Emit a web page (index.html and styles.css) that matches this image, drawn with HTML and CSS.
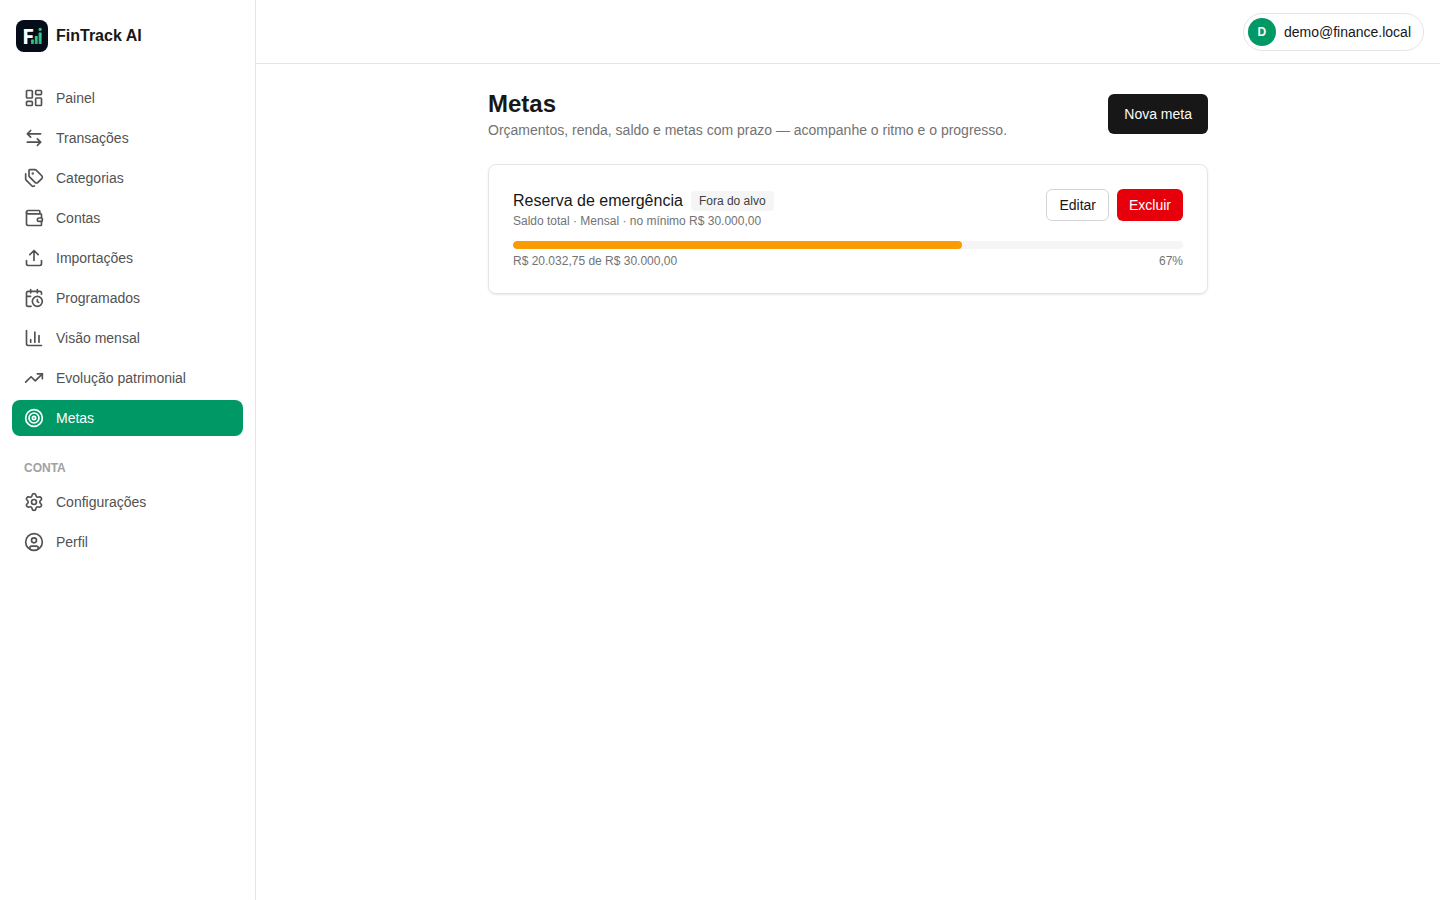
FILE: index.html
```html
<!DOCTYPE html>
<html lang="pt-BR">
<head>
  <meta charset="utf-8">
  <meta name="viewport" content="width=device-width, initial-scale=1">
  <title>Metas · FinTrack AI</title>
  <link rel="stylesheet" href="styles.css">
</head>
<body>
  <div class="app">
    <aside class="sidebar">
      <a class="brand" href="#">
        <svg class="brand-mark" viewBox="0 0 32 32" aria-hidden="true">
          <defs>
            <linearGradient id="bars" x1="0" y1="1" x2="1" y2="0">
              <stop offset="0" stop-color="#1fa86c"/>
              <stop offset="1" stop-color="#4cd6a0"/>
            </linearGradient>
          </defs>
          <rect width="32" height="32" rx="8" fill="#050d18"/>
          <text class="brand-letter" x="6" y="24">F</text>
          <g fill="url(#bars)">
            <rect x="15" y="19.500" width="2.800" height="4.500" rx=".6"/>
            <rect x="18.800" y="16" width="2.800" height="8" rx=".6"/>
            <rect x="22.600" y="12.500" width="3" height="11.500" rx=".6"/>
            <circle cx="24.100" cy="9.400" r="1.600"/>
          </g>
        </svg>
        <span>FinTrack AI</span>
      </a>
      <nav class="nav" aria-label="Principal">
        <a class="nav-link" href="#"><svg class="icon" viewBox="0 0 24 24" aria-hidden="true"><rect width="7" height="9" x="3" y="3" rx="1"/><rect width="7" height="5" x="14" y="3" rx="1"/><rect width="7" height="9" x="14" y="12" rx="1"/><rect width="7" height="5" x="3" y="16" rx="1"/></svg>Painel</a>
        <a class="nav-link" href="#"><svg class="icon" viewBox="0 0 24 24" aria-hidden="true"><path d="M8 3 4 7l4 4M4 7h16M16 21l4-4-4-4M20 17H4"/></svg>Transações</a>
        <a class="nav-link" href="#"><svg class="icon" viewBox="0 0 24 24" aria-hidden="true"><path d="M13.172 2a2 2 0 0 1 1.414.586l6.71 6.71a2.4 2.4 0 0 1 0 3.408l-4.592 4.592a2.4 2.4 0 0 1-3.408 0l-6.71-6.71A2 2 0 0 1 6 9.172V3a1 1 0 0 1 1-1z"/><path d="M2 7v6.172a2 2 0 0 0 .586 1.414l6.71 6.71a2.4 2.4 0 0 0 3.191.193"/><circle cx="10.5" cy="6.5" r=".5" fill="currentColor"/></svg>Categorias</a>
        <a class="nav-link" href="#"><svg class="icon" viewBox="0 0 24 24" aria-hidden="true"><path d="M19 7V4a1 1 0 0 0-1-1H5a2 2 0 0 0 0 4h15a1 1 0 0 1 1 1v4h-3a2 2 0 0 0 0 4h3a1 1 0 0 0 1-1v-2a1 1 0 0 0-1-1"/><path d="M3 5v14a2 2 0 0 0 2 2h15a1 1 0 0 0 1-1v-4"/></svg>Contas</a>
        <a class="nav-link" href="#"><svg class="icon" viewBox="0 0 24 24" aria-hidden="true"><path d="M12 3v12M17 8l-5-5-5 5"/><path d="M21 15v4a2 2 0 0 1-2 2H5a2 2 0 0 1-2-2v-4"/></svg>Importações</a>
        <a class="nav-link" href="#"><svg class="icon" viewBox="0 0 24 24" aria-hidden="true"><path d="M16 14v2.2l1.6 1M16 2v4M21 7.500V6a2 2 0 0 0-2-2H5a2 2 0 0 0-2 2v14a2 2 0 0 0 2 2h3.500M3 10h5M8 2v4"/><circle cx="16" cy="16" r="6"/></svg>Programados</a>
        <a class="nav-link" href="#"><svg class="icon" viewBox="0 0 24 24" aria-hidden="true"><path d="M3 3v16a2 2 0 0 0 2 2h16M18 17V9M13 17V5M8 17v-3"/></svg>Visão mensal</a>
        <a class="nav-link" href="#"><svg class="icon" viewBox="0 0 24 24" aria-hidden="true"><path d="M16 7h6v6"/><path d="m22 7-8.500 8.500-5-5L2 17"/></svg>Evolução patrimonial</a>
        <a class="nav-link active" href="#" aria-current="page"><svg class="icon" viewBox="0 0 24 24" aria-hidden="true"><circle cx="12" cy="12" r="10"/><circle cx="12" cy="12" r="6"/><circle cx="12" cy="12" r="2"/></svg>Metas</a>
      </nav>
      <h2 class="nav-title">CONTA</h2>
      <nav class="nav" aria-label="Conta">
        <a class="nav-link" href="#"><svg class="icon" viewBox="0 0 24 24" aria-hidden="true"><path d="M9.671 4.136a2.34 2.34 0 0 1 4.659 0 2.34 2.34 0 0 0 3.319 1.915 2.34 2.34 0 0 1 2.33 4.033 2.34 2.34 0 0 0 0 3.831 2.34 2.34 0 0 1-2.33 4.033 2.34 2.34 0 0 0-3.319 1.915 2.34 2.34 0 0 1-4.659 0 2.34 2.34 0 0 0-3.32-1.915 2.34 2.34 0 0 1-2.33-4.033 2.34 2.34 0 0 0 0-3.831A2.34 2.34 0 0 1 6.35 6.051a2.34 2.34 0 0 0 3.319-1.915"/><circle cx="12" cy="12" r="3"/></svg>Configurações</a>
        <a class="nav-link" href="#"><svg class="icon" viewBox="0 0 24 24" aria-hidden="true"><circle cx="12" cy="12" r="10"/><circle cx="12" cy="10" r="3"/><path d="M7 20.662V19a2 2 0 0 1 2-2h6a2 2 0 0 1 2 2v1.662"/></svg>Perfil</a>
      </nav>
    </aside>
    <div class="content">
      <header class="topbar">
        <button class="account" type="button"><span class="avatar">D</span>demo@finance.local</button>
      </header>
      <main class="page">
        <div class="page-head">
          <div>
            <h1 class="page-title">Metas</h1>
            <p class="page-lead">Orçamentos, renda, saldo e metas com prazo — acompanhe o ritmo e o progresso.</p>
          </div>
          <button class="btn btn-primary" type="button">Nova meta</button>
        </div>
        <article class="card">
          <div class="goal-head">
            <div>
              <div class="goal-name"><h2 class="goal-title">Reserva de emergência</h2><span class="badge">Fora do alvo</span></div>
              <p class="small">Saldo total · Mensal · no mínimo R$ 30.000,00</p>
            </div>
            <div class="actions">
              <button class="btn btn-outline" type="button">Editar</button>
              <button class="btn btn-danger" type="button">Excluir</button>
            </div>
          </div>
          <div class="progress" role="progressbar" aria-label="Progresso da meta" aria-valuenow="67" aria-valuemin="0" aria-valuemax="100"><div class="progress-fill" style="width:67%"></div></div>
          <div class="goal-foot small"><span>R$ 20.032,75 de R$ 30.000,00</span><span>67%</span></div>
        </article>
      </main>
    </div>
  </div>
</body>
</html>
```

FILE: styles.css
```css
*, *::before, *::after { box-sizing: border-box; }

body {
  margin: 0;
  background: #fff;
  color: #171717;
  font: 14px/20px "Liberation Sans", Arial, sans-serif;
}

h1, h2, p { margin: 0; }
a { color: inherit; text-decoration: none; }
button { font: inherit; color: inherit; cursor: pointer; }

.app { display: flex; min-height: 100vh; }

.sidebar {
  flex: 0 0 256px;
  padding: 16px 12px;
  border-right: 1px solid #e5e5e5;
}

.brand {
  display: flex;
  align-items: center;
  gap: 8px;
  padding: 4px;
  margin-bottom: 24px;
  font-size: 16px;
  line-height: 24px;
  font-weight: 600;
}
.brand-mark { width: 32px; height: 32px; }
.brand-letter { fill: #fff; font-size: 22px; font-weight: 700; font-family: "Open Sans", "Liberation Sans", sans-serif; }

.nav { display: flex; flex-direction: column; gap: 4px; }
.nav-link {
  display: flex;
  align-items: center;
  gap: 12px;
  padding: 8px 12px;
  border-radius: 8px;
  color: #525252;
}
.nav-link.active { background: #009966; color: #fff; }

.icon {
  width: 20px;
  height: 20px;
  fill: none;
  stroke: currentColor;
  stroke-width: 2;
  stroke-linecap: round;
  stroke-linejoin: round;
}

.nav-title {
  padding: 0 12px;
  margin: 24px 0 8px;
  font-size: 12px;
  line-height: 16px;
  font-weight: 600;
  color: #a1a1a1;
}

.content { flex: 1; min-width: 0; }

.topbar {
  display: flex;
  align-items: center;
  justify-content: flex-end;
  height: 64px;
  padding: 0 16px;
  border-bottom: 1px solid #e5e5e5;
}
.account {
  display: flex;
  align-items: center;
  gap: 8px;
  padding: 4px 12px 4px 4px;
  border: 1px solid #e5e5e5;
  border-radius: 20px;
  background: #fff;
}
.avatar {
  display: grid;
  place-items: center;
  width: 28px;
  height: 28px;
  border-radius: 50%;
  background: #009966;
  color: #fff;
  font-size: 12px;
  font-weight: 600;
}

.page {
  max-width: 768px;
  margin: 0 auto;
  padding: 24px;
}
.page-head {
  display: flex;
  align-items: center;
  justify-content: space-between;
  gap: 16px;
  margin-bottom: 24px;
}
.page-title { font-size: 24px; line-height: 32px; font-weight: 700; }
.page-lead { color: #737373; }

.btn {
  height: 32px;
  padding: 0 12px;
  border: 0;
  border-radius: 6px;
  white-space: nowrap;
}
.btn-primary { height: 40px; padding: 0 16px; background: #171717; color: #fafafa; }
.btn-outline { border: 1px solid #d4d4d4; background: #fff; }
.btn-danger { background: #e7000b; color: #fff; }

.card {
  padding: 24px;
  border: 1px solid #e5e5e5;
  border-radius: 8px;
  box-shadow: 0 1px 2px rgba(0, 0, 0, 0.1);
}
.goal-head {
  display: flex;
  align-items: flex-start;
  justify-content: space-between;
  gap: 16px;
  margin-bottom: 12px;
}
.goal-name { display: flex; align-items: center; gap: 8px; }
.goal-title { font-size: 16px; line-height: 24px; font-weight: 400; }
.badge {
  padding: 2px 8px;
  border-radius: 4px;
  background: #f5f5f5;
  color: #404040;
  font-size: 12px;
  line-height: 16px;
}
.small { font-size: 12px; line-height: 16px; color: #737373; }
.actions { display: flex; gap: 8px; }

.progress {
  height: 8px;
  margin-bottom: 4px;
  border-radius: 4px;
  background: #f5f5f5;
  overflow: hidden;
}
.progress-fill { height: 100%; border-radius: 4px; background: #fb9b04; }
.goal-foot { display: flex; justify-content: space-between; }
```
